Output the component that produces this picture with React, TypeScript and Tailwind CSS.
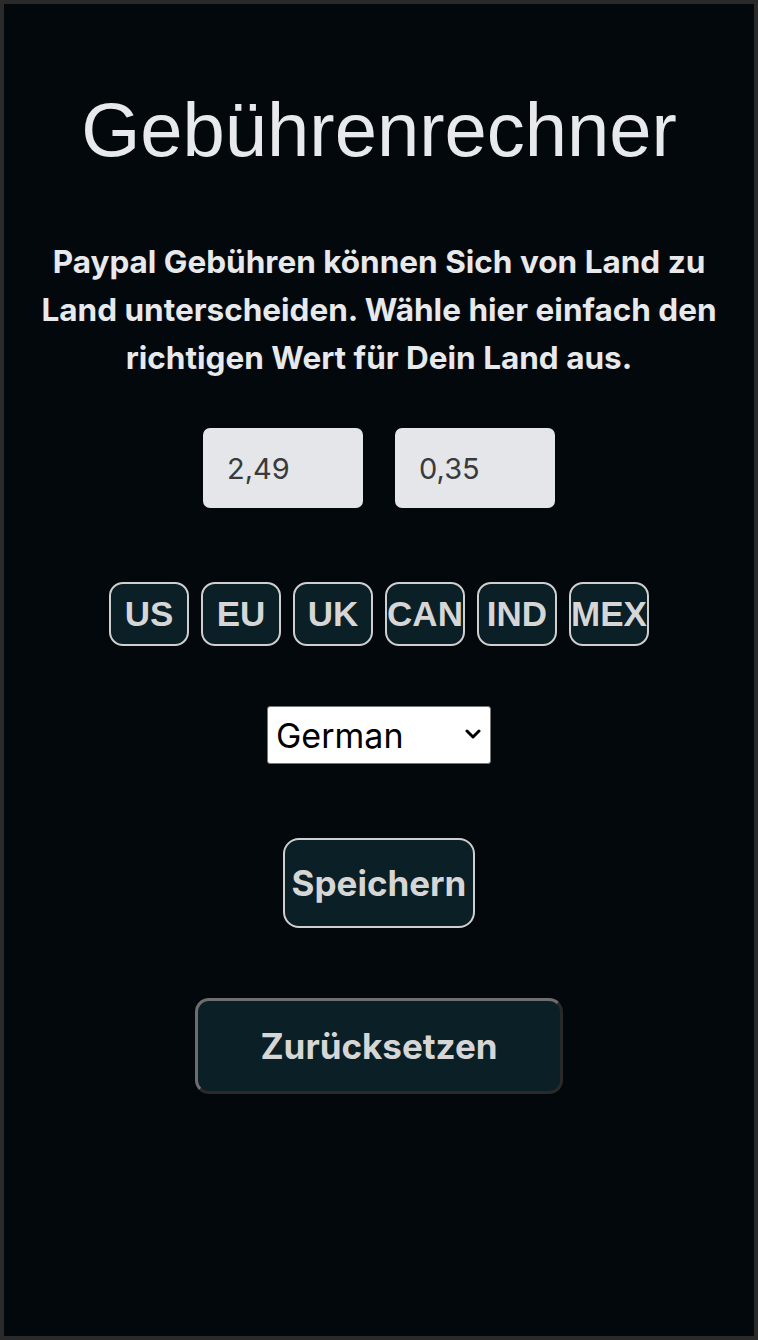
import React from "react";

export default function App() {
  const countries = ["US", "EU", "UK", "CAN", "IND", "MEX"];
  return (
    <div
      className="w-[758px] h-[1340px] border-4 border-[#2a2a2a] bg-[#02080b] flex flex-col items-center"
      style={{ fontFamily: "Inter, 'Liberation Sans', sans-serif" }}
    >
      <h1
        className="mt-[80px] text-[76px] leading-[92px] text-[#e8e9ec] font-normal"
        style={{ fontFamily: "'Liberation Sans', Arial, sans-serif" }}
      >
        Gebührenrechner
      </h1>
      <p className="mt-[62px] px-[30px] text-center text-[31.5px] leading-[48px] font-bold text-[#e8e9ec]">
        Paypal Gebühren können Sich von Land zu Land unterscheiden. Wähle hier einfach den richtigen Wert für Dein Land aus.
      </p>
      <div className="mt-[46px] flex gap-[32px]">
        <input
          defaultValue="2,49"
          className="w-[160px] h-[80px] rounded-[7px] bg-[#e5e6ea] px-[24px] text-[29px] text-[#3a3a3a] outline-none"
        />
        <input
          defaultValue="0,35"
          className="w-[160px] h-[80px] rounded-[7px] bg-[#e5e6ea] px-[24px] text-[29px] text-[#3a3a3a] outline-none"
        />
      </div>
      <div className="mt-[74px] flex gap-[12px]">
        {countries.map((c) => (
          <button
            key={c}
            className="w-[80px] h-[64px] rounded-[14px] border-2 border-[#cfcfcf] bg-[#0b1f26] text-[35px] font-bold text-[#d6d6d6] flex items-center justify-center overflow-visible whitespace-nowrap"
            style={{ fontFamily: "'Liberation Sans', Arial, sans-serif" }}
          >
            {c}
          </button>
        ))}
      </div>
      <div className="relative mt-[60px] w-[224px] h-[58px]">
        <select
          defaultValue="German"
          className="appearance-none w-full h-full bg-white border border-[#767676] rounded-[3px] text-[34px] text-black pl-[8px] outline-none"
        >
          <option>German</option>
          <option>English</option>
        </select>
        <svg
          className="absolute right-[10px] top-[22px] pointer-events-none"
          width="16"
          height="12"
          viewBox="0 0 16 12"
          fill="none"
        >
          <path d="M2 3 L8 9 L14 3" stroke="#000" strokeWidth="3" strokeLinecap="round" strokeLinejoin="round" />
        </svg>
      </div>
      <button className="mt-[74px] w-[192px] h-[90px] rounded-[16px] border-2 border-[#cfcfcf] bg-[#0b1f26] text-[35px] font-bold text-[#d6d6d6]">
        Speichern
      </button>
      <button
        className="mt-[70px] w-[368px] h-[96px] rounded-[14px] bg-[#0b1f26] text-[35px] font-bold text-[#d6d6d6] border-[3px] border-t-[#6e6e6e] border-l-[#6e6e6e] border-r-[#2a2a2a] border-b-[#2a2a2a]"
      >
        Zurücksetzen
      </button>
    </div>
  );
}
